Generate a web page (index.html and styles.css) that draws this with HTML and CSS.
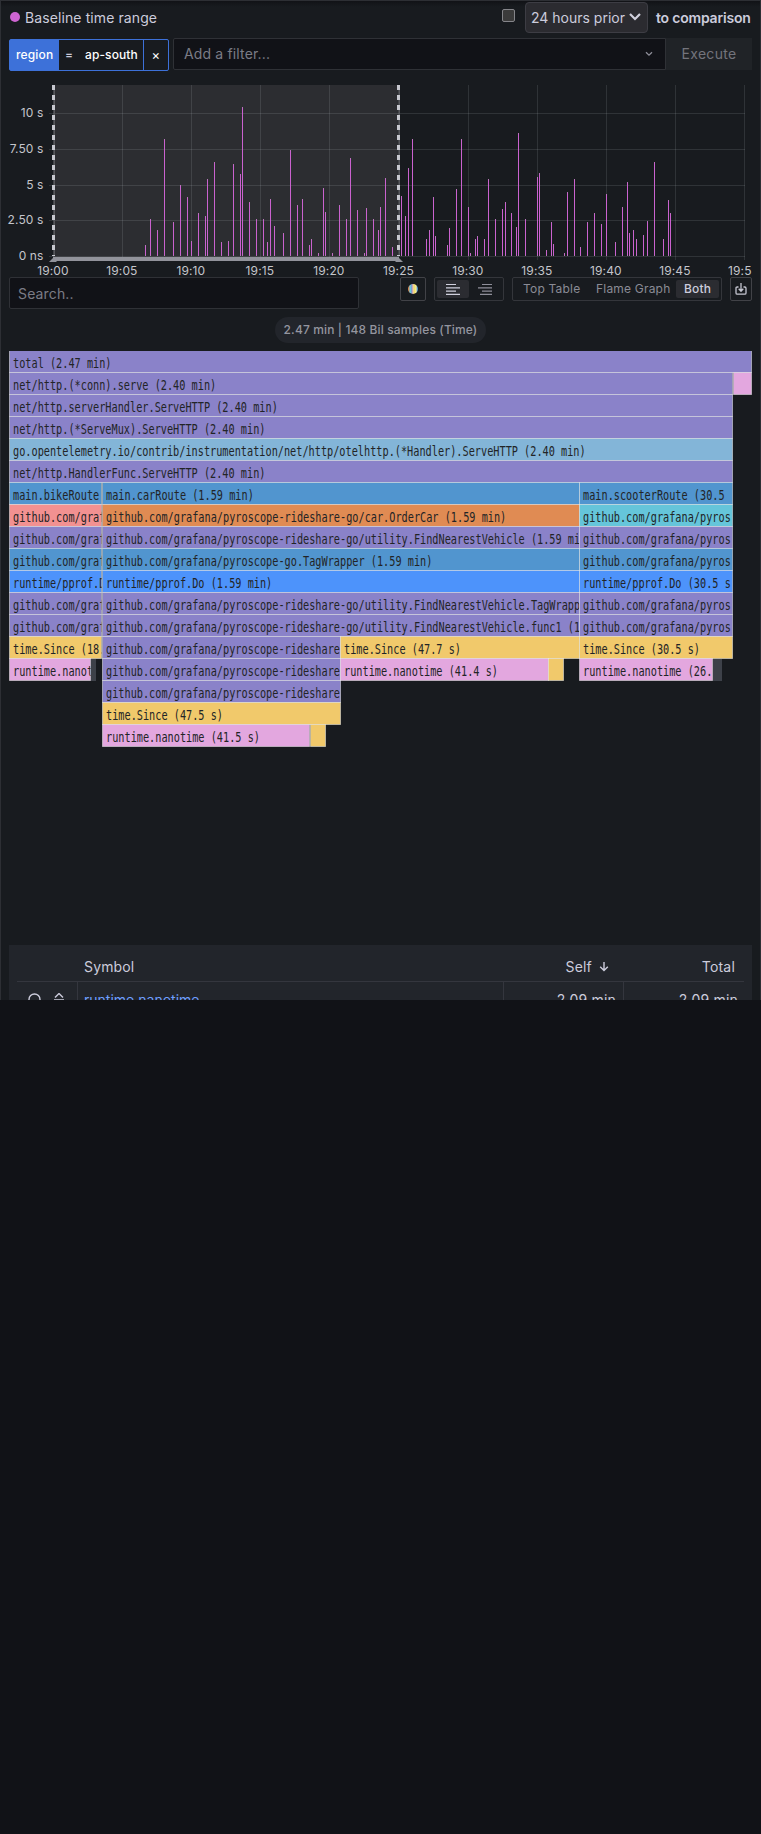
FILE: index.html
```html
<!DOCTYPE html>
<html lang="en">
<head>
<meta charset="utf-8">
<title>Baseline time range</title>
<link rel="stylesheet" href="styles.css">
</head>
<body>
<main class="panel">
  <header class="header">
    <span class="dot"></span>
    <span class="title">Baseline time range</span>
    <span class="checkbox"></span>
    <span class="select">24 hours prior
      <svg class="select-arrow" width="14" height="10" viewBox="0 0 14 10"><path d="M2 2l5 5 5-5"/></svg>
    </span>
    <strong class="compare">to comparison</strong>
  </header>

  <div class="filters">
    <div class="chip"><span class="chip-key">region</span><span class="chip-op">=</span><span class="chip-value">ap-south</span><span class="chip-close">×</span></div>
    <div class="filter-input"><span>Add a filter...</span>
      <svg width="8" height="6" viewBox="0 0 8 6"><path d="M1 1.2l3 3 3-3"/></svg>
    </div>
    <div class="execute">Execute</div>
  </div>

  <svg class="timeline" id="timeline" width="759" height="206" viewBox="1 71 759 206"></svg>

  <div class="toolbar">
    <div class="search">Search..</div>
    <div class="tools">
      <span class="tool tool-color"><i class="swatch"></i></span>
      <span class="tool tool-align">
        <span class="align active"><svg width="14" height="11" viewBox="0 0 14 11"><path d="M0 .5h10M0 3.8h14M0 7.1h10M0 10.4h14"/></svg></span>
        <span class="align"><svg width="14" height="11" viewBox="0 0 14 11"><path d="M4 .5h10M0 3.8h14M4 7.1h10M2 10.4h12"/></svg></span>
      </span>
      <span class="tool tool-view">
        <span class="view view-table">Top Table</span><span class="view view-flame">Flame Graph</span><span class="view view-both active">Both</span>
      </span>
      <span class="tool tool-download"><svg width="12" height="12" viewBox="0 0 12 12"><path d="M3.5 4H2.2Q1 4 1 5.2V10q0 1.2 1.2 1.2h7.6Q11 11.200 11 10V5.200Q11 4 9.800 4H8.500M6 0v8M3.700 5.800L6 8.200l2.300-2.400"/></svg></span>
    </div>
  </div>

  <div class="summary"><span class="pill">2.47 min | 148 Bil samples (Time)</span></div>

  <svg class="flame" id="flame" width="745" height="594" viewBox="9 351 745 594"></svg>

  <section class="table">
    <div class="row head">
      <span class="cell tools-cell"></span><span class="cell symbol">Symbol</span>
      <span class="cell self">Self <svg width="10" height="11" viewBox="0 0 10 11"><path d="M5 1v8.500M1.200 5.800L5 9.600l3.800-3.800"/></svg></span>
      <span class="cell total">Total</span>
    </div>
    <div class="row">
      <span class="cell tools-cell">
        <svg width="14" height="15" viewBox="0 0 14 15"><circle cx="6.500" cy="6.500" r="5.500"/><path d="M10.500 10.500l3 3"/></svg>
        <svg width="10" height="15" viewBox="0 0 10 15"><path d="M1 4.500l4-4 4 4M0 7h10M0 9.500h10M1 11l4 4 4-4"/></svg>
      </span>
      <span class="cell symbol link">runtime.nanotime</span>
      <span class="cell self">2.09 min</span>
      <span class="cell total">2.09 min</span>
    </div>
  </section>
</main>
<script src="charts.js"></script>
</body>
</html>
```

FILE: styles.css
```css
* { box-sizing: border-box; }
body {
  margin: 0;
  height: 1834px;
  background: #111217;
  font-family: Inter, "Liberation Sans", sans-serif;
  font-size: 14px;
  letter-spacing: 0.15px;
  color: #ccccdc;
}
svg { display: block; }
.panel {
  height: 1000px;
  overflow: hidden;
  background: linear-gradient(#111216, #181b1f 6px);
  border: 1px solid #2d2f34;
  border-bottom: 0;
}
.header {
  display: flex;
  align-items: center;
  height: 37px;
  padding: 0 7px 5px 9px;
}
.dot { width: 10px; height: 10px; border-radius: 50%; background: #ce65d2; }
.title { flex: 1; margin-left: 5px; letter-spacing: 0.1px; }
.checkbox {
  width: 13px; height: 13px; margin: 0 10px 3px 0;
  border: 1px solid #85858a; border-radius: 2px; background: #3b3b3b;
}
.select {
  display: flex; align-items: center; justify-content: space-between;
  width: 123px; height: 31px; margin-right: 8px; padding: 0 5px 0 5px;
  border: 1px solid #3d3d44; border-radius: 4px; background: #2b2b30;
  letter-spacing: 0; white-space: nowrap;
}
.select-arrow { flex: none; }
.select-arrow path { fill: none; stroke: #d0d0dd; stroke-width: 2.2; }
.compare { width: 97px; font-weight: 600; letter-spacing: -0.2px; white-space: nowrap; }

.filters { display: flex; height: 33px; padding: 0 8px; }
.chip {
  display: flex; align-items: center;
  width: 160px; height: 32px; margin: 1px 4px 0 0;
  border: 1px solid #3d71d9; border-radius: 2px;
  font-size: 12px; font-weight: 500; line-height: 30px; color: #fff;
}
.chip-key { width: 49px; padding-left: 6px; background: #3d71d9; }
.chip-op { width: 26px; padding-left: 6px; color: #ccccdc; }
.chip-value { width: 58px; white-space: nowrap; letter-spacing: 0.1px; }
.chip-close { flex: 1; text-align: center; border-left: 1px solid #3d71d9; font-size: 13px; font-weight: 400; }
.filter-input {
  display: flex; flex: 1; align-items: center; justify-content: space-between;
  height: 32px; padding: 0 12px 1px 10px;
  background: #111217; border: 1px solid #2f3136; border-radius: 2px 0 0 2px; color: #7b7c86;
}
.filter-input svg path { fill: none; stroke: #8e8e99; stroke-width: 1.3; }
.execute { width: 86px; height: 32px; line-height: 32px; text-align: center; background: #202327; color: #73747c; letter-spacing: 0.3px; }

.timeline .axis { font-family: Inter, sans-serif; font-size: 12px; fill: #c4c5cb; letter-spacing: 0.12px; }
.timeline .grid { stroke: #f0faff; stroke-opacity: 0.11; }
.timeline .spike { stroke: #ca62cf; }
.timeline .spike-tip { stroke: #b877b9; }
.timeline .edge { stroke: #c7c8cf; stroke-width: 3; stroke-dasharray: 5 5; }
.timeline .edge-shadow { stroke: #55565b; }
.timeline .selection { fill: #2c2d31; }
.timeline .handle { fill: #92939b; }

.toolbar { display: flex; justify-content: space-between; height: 32px; padding: 0 8px; }
.search {
  width: 350px; height: 32px; padding-left: 8px; line-height: 32px;
  border: 1px solid #2f3136; border-radius: 2px; background: #111217; color: #7b7c86;
}
.tools { display: flex; gap: 8px; height: 24px; font-size: 12px; }
.tool { display: flex; align-items: center; justify-content: center; height: 24px; border: 1px solid #34363b; border-radius: 2px; }
.tool-color { width: 26px; border-color: #414247; }
.swatch {
  width: 10px; height: 10px; border-radius: 50%;
  background: linear-gradient(90deg, #e08b53 0 10%, #65c5da 18% 30%, #8a82c9 38%, #f0c8a0 50%, #f1e06b 65%, #f7ee9a 80%, #5195cf 95%);
}
.tool-align { width: 70px; }
.align { display: flex; align-items: center; justify-content: center; width: 32px; height: 18px; border-radius: 2px; }
.align path { fill: none; stroke: #8e8e99; stroke-width: 1.2; }
.align.active path { stroke: #d0d0dd; }
.tool-view { width: 210px; justify-content: flex-start; color: #8a8b95; letter-spacing: 0.2px; }
.view { height: 18px; line-height: 17px; white-space: nowrap; }
.view-table { width: 73px; padding-left: 10px; }
.view-flame { width: 90px; padding-left: 10px; }
.view-both { width: 43px; text-align: center; border-radius: 2px; font-weight: 500; }
.active { background: #2b2c31; color: #ccccdc; }
.tool-download { width: 22px; border-color: #414247; }
.tool-download path { fill: none; stroke: #c6c7d2; stroke-width: 1.3; }

.summary { display: flex; justify-content: center; height: 42px; padding-top: 8px; }
.pill {
  width: 211px; height: 26px; line-height: 26px; border-radius: 13px;
  background: #22252b; color: #94959f; text-align: center; font-size: 12px; font-weight: 500; letter-spacing: 0.13px;
}

.flame { margin-left: 8px; }
.flame rect { stroke: #f4f5f5; stroke-opacity: 0.5; }
.flame .muted { stroke: none; }
.flame text { font-family: "DejaVu Sans Mono", monospace; font-size: 13.3px; letter-spacing: 0; fill: #222426; }

.table { height: 160px; margin: 0 8px; padding: 0 8px; background: #22252b; }
.row { display: flex; height: 36px; line-height: 36px; border-bottom: 1px solid #34363e; }
.row.head { height: 37px; padding-top: 5px; }
.cell { display: flex; align-items: center; height: 36px; border-left: 1px solid #34363e; }
.head .cell { border-color: transparent; line-height: 36px; height: 32px; padding-top: 1px; }
.tools-cell { width: 60px; border-left: 0; gap: 12px; padding-left: 11px; }
.tools-cell svg path, .tools-cell svg circle, .self svg path { fill: none; stroke: #ccccdc; stroke-width: 1.4; }
.symbol { flex: 1; padding-left: 6px; }
.self { width: 120px; justify-content: flex-end; padding-right: 7px; letter-spacing: 0.2px; }
.head .self { gap: 7px; padding-right: 14px; }
.total { width: 121px; justify-content: flex-end; padding-right: 6px; letter-spacing: 0.2px; }
.head .total { padding-right: 9px; }
.link { color: #6e9fff; letter-spacing: 0; }
```

FILE: charts.js
```js
const NS = "http://www.w3.org/2000/svg";
function add(parent, tag, attrs, text) {
  const node = document.createElementNS(NS, tag);
  for (const key in attrs) node.setAttribute(key, attrs[key]);
  if (text) node.textContent = text;
  parent.appendChild(node);
  return node;
}
const line = (p, cls, x1, y1, x2, y2) => add(p, "line", { class: cls, x1, y1, x2, y2 });

/* Timeline */
const tl = document.getElementById("timeline");
const ticks = [53.5, 122.5, 191.5, 260.5, 329.5, 398.5, 468.5, 537.5, 606.5, 675.5, 744.5];
const times = ["19:00", "19:05", "19:10", "19:15", "19:20", "19:25", "19:30", "19:35", "19:40", "19:45", "19:5"];
const levels = [[113.5, "10 s"], [149.5, "7.50 s"], [185.5, "5 s"], [220.5, "2.50 s"], [256.5, "0 ns"]];
add(tl, "rect", { class: "selection", x: 53, y: 85, width: 346, height: 172 });
ticks.forEach((x, i) => {
  line(tl, "grid", x, 85, x, 260);
  const last = i === ticks.length - 1;
  add(tl, "text", { class: "axis", x: last ? 728 : x - (i === 5 ? 0 : 0.6), y: 275, "text-anchor": last ? "start" : "middle" }, times[i]);
});
levels.forEach(([y, label]) => {
  line(tl, "grid", 49, y, 745, y);
  add(tl, "text", { class: "axis", x: 43.5, y: y + 3.5, "text-anchor": "end" }, label);
});
/* [pixel column, pixel top] of every sample */
const spikes = [
  [145,245],[150,219],[157,230],[164,139],[173,222],[180,185],[187,197],[191,241],[198,213],[205,216],[207,179],[214,162],
  [221,242],[228,241],[233,164],[240,174],[242,107],[249,202],[256,219],[263,219],[267,242],[270,199],[274,226],[283,233],
  [290,150],[297,205],[302,199],[309,245],[311,239],[318,253],[323,188],[325,212],[332,253],[339,205],[346,219],[350,158],
  [357,210],[364,253],[366,208],[373,219],[378,230],[380,207],[385,178],[392,247],[399,239],[401,196],[405,216],[408,168],
  [412,139],[426,239],[429,230],[433,197],[435,236],[447,245],[449,228],[456,189],[461,139],[468,207],[470,253],[475,239],
  [477,236],[484,239],[488,179],[495,219],[502,209],[505,202],[511,213],[516,227],[518,133],[525,219],[537,177],[539,173],
  [546,250],[551,222],[553,244],[564,253],[567,192],[574,179],[580,247],[587,222],[594,213],[601,224],[606,194],[615,242],
  [622,207],[627,182],[629,233],[633,230],[636,239],[643,235],[647,221],[654,162],[663,239],[668,200],[670,213]
];
spikes.forEach(([x, y]) => {
  line(tl, "spike-tip", x + 0.5, y, x + 0.5, 256);
  line(tl, "spike", x + 0.5, y + 1, x + 0.5, 255);
});
add(tl, "rect", { class: "handle", x: 53, y: 257, width: 346, height: 4 });
add(tl, "path", { class: "handle", d: "M49 262l4-4 4 4z" });
add(tl, "path", { class: "handle", d: "M395 262l4-4 4 4z" });
line(tl, "edge-shadow", 54.5, 85, 54.5, 256);
line(tl, "edge-shadow", 399.5, 85, 399.5, 256);
line(tl, "edge", 53.5, 85, 53.5, 256);
line(tl, "edge", 398.5, 85, 398.5, 256);

/* Flame graph: [level, left, right, colour, label] */
const P = "#8a82c9", B = "#5195cf", D = "#4d93fb", Y = "#f1c96b", K = "#e3a7df", G = "#3d4149";
const go = "github.com/grafana/pyroscope-rideshare-go/";
const frames = [
  [0, 9.5, 751.5, P, "total (2.47 min)"],
  [1, 9.5, 732.5, P, "net/http.(*conn).serve (2.40 min)"],
  [1, 733.5, 751.5, K, ""],
  [2, 9.5, 732.5, P, "net/http.serverHandler.ServeHTTP (2.40 min)"],
  [3, 9.5, 732.5, P, "net/http.(*ServeMux).ServeHTTP (2.40 min)"],
  [4, 9.5, 732.5, "#83b5d8", "go.opentelemetry.io/contrib/instrumentation/net/http/otelhttp.(*Handler).ServeHTTP (2.40 min)"],
  [5, 9.5, 732.5, P, "net/http.HandlerFunc.ServeHTTP (2.40 min)"],
  [6, 9.5, 101.5, B, "main.bikeRoute"],
  [6, 102.5, 579.5, B, "main.carRoute (1.59 min)"],
  [6, 579.5, 732.5, B, "main.scooterRoute (30.5"],
  [7, 9.5, 101.5, "#f29191", "github.com/graf"],
  [7, 102.5, 579.5, "#e08b53", go + "car.OrderCar (1.59 min)"],
  [7, 579.5, 732.5, "#65c5da", "github.com/grafana/pyros"],
  [8, 9.5, 101.5, P, "github.com/graf"],
  [8, 102.5, 579.5, P, go + "utility.FindNearestVehicle (1.59 mi"],
  [8, 579.5, 732.5, P, "github.com/grafana/pyros"],
  [9, 9.5, 101.5, B, "github.com/graf"],
  [9, 102.5, 579.5, B, "github.com/grafana/pyroscope-go.TagWrapper (1.59 min)"],
  [9, 579.5, 732.5, B, "github.com/grafana/pyros"],
  [10, 9.5, 101.5, D, "runtime/pprof.D"],
  [10, 102.5, 579.5, D, "runtime/pprof.Do (1.59 min)"],
  [10, 579.5, 732.5, D, "runtime/pprof.Do (30.5 s"],
  [11, 9.5, 101.5, P, "github.com/graf"],
  [11, 102.5, 579.5, P, go + "utility.FindNearestVehicle.TagWrapp"],
  [11, 579.5, 732.5, P, "github.com/grafana/pyros"],
  [12, 9.5, 101.5, P, "github.com/graf"],
  [12, 102.5, 579.5, P, go + "utility.FindNearestVehicle.func1 (1"],
  [12, 579.5, 732.5, P, "github.com/grafana/pyros"],
  [13, 9.5, 101.5, Y, "time.Since (18."],
  [13, 102.5, 340.5, P, "github.com/grafana/pyroscope-rideshare"],
  [13, 340.5, 579.5, Y, "time.Since (47.7 s)"],
  [13, 579.5, 732.5, Y, "time.Since (30.5 s)"],
  [14, 9.5, 90.5, K, "runtime.nanot"],
  [14, 91, 96, G, ""],
  [14, 102.5, 340.5, P, "github.com/grafana/pyroscope-rideshare"],
  [14, 340.5, 548.5, K, "runtime.nanotime (41.4 s)"],
  [14, 548.5, 563.5, Y, ""],
  [14, 579.5, 712.5, K, "runtime.nanotime (26."],
  [14, 713, 722, G, ""],
  [15, 102.5, 340.5, P, "github.com/grafana/pyroscope-rideshare"],
  [16, 102.5, 340.5, Y, "time.Since (47.5 s)"],
  [17, 102.5, 309.5, K, "runtime.nanotime (41.5 s)"],
  [17, 310.5, 325.5, Y, ""]
];
const fg = document.getElementById("flame");
frames.forEach(([level, left, right, fill, label], i) => {
  const y = 350.5 + level * 22;
  const attrs = { x: left, y, width: right - left, height: 22, fill };
  if (fill === G) Object.assign(attrs, { class: "muted", y: y + 0.5 });
  add(fg, "rect", attrs);
  if (!label) return;
  const clip = add(fg, "clipPath", { id: "frame" + i });
  add(clip, "rect", { x: left, y, width: right - left, height: 22 });
  const g = add(fg, "g", { "clip-path": `url(#frame${i})` });
  add(g, "text", { transform: `translate(${left + 3.5} ${y + 17.5}) scale(0.7695 1)` }, label);
});
```
